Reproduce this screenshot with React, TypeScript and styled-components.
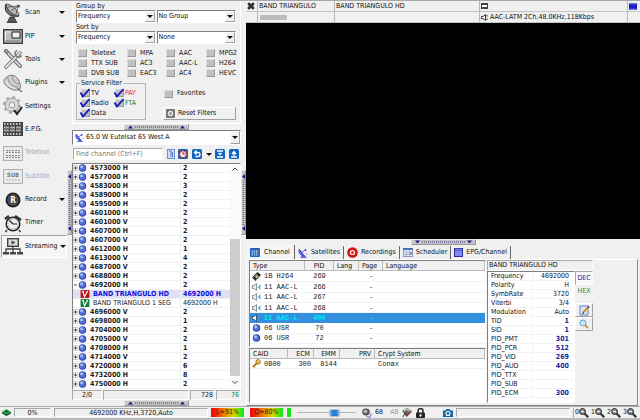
import React from "react";
import styled, { createGlobalStyle, css } from "styled-components";

const ui = '"DejaVu Sans Condensed", "DejaVu Sans", sans-serif';
const mono = '"Liberation Mono", monospace';

const Global = createGlobalStyle`
  * { box-sizing: border-box; }
  body { margin: 0; background: #f0f0f0; color: #111; font: 7px/9px ${ui}; }
  button, input, select { font: inherit; color: inherit; margin: 0; padding: 0; border: 0; border-radius: 0; background: none; }
  svg { display: block; flex: none; }
  table { border-collapse: separate; border-spacing: 0; }
  td, th { padding: 0; font-weight: normal; text-align: left; white-space: nowrap; }
`;

const sunken = css`
  border: 1px solid;
  border-color: #808080 #fff #fff #808080;
`;
const softSunken = css`
  border: 1px solid;
  border-color: #a8a8a8 #fdfdfd #fdfdfd #a8a8a8;
`;
const raised = css`
  border: 1px solid;
  border-color: #fff #a0a0a0 #a0a0a0 #fff;
`;

const Page = styled.div`
  min-height: 100vh;
  display: flex;
  flex-direction: column;
  border-top: 1px solid #a8a8a8;
  overflow: hidden;
`;
const Main = styled.div`
  flex: 1;
  display: flex;
`;

/* Left tool bar */
const Tools = styled.nav`
  width: 67px;
  flex: none;
  display: grid;
  grid-template-columns: minmax(0, 1fr);
  grid-template-rows: repeat(11, minmax(0, 1fr));
  height: 257px;
  padding-left: 1px;
`;
const Tool = styled.button<{ $active?: boolean }>`
  display: flex;
  align-items: center;
  gap: 2px;
  padding: 0 2px;
  text-align: left;
  &:disabled { color: #aaa; }
  ${(p) => p.$active && css`
    background: #f6f6f6;
    border: 1px solid;
    border-color: #a0a0a0 #fff #fff #a0a0a0;
    padding: 0 1px;
  `}
`;
const ToolLabel = styled.span`
  flex: 1;
`;

/* Splitters */
const Gutter = styled.div<{ $row?: boolean; $at: string }>`
  flex: none;
  display: flex;
  flex-direction: ${(p) => (p.$row ? "row" : "column")};
  ${(p) => (p.$row ? "height: 6px; justify-content: " + p.$at : "width: 5px; padding-top: " + p.$at)};
`;
const Grip = styled.button<{ $row?: boolean }>`
  width: ${(p) => (p.$row ? 65 : 5)}px;
  height: ${(p) => (p.$row ? 6 : 65)}px;
  background: #c4c4c4;
  border: 1px solid;
  border-color: #e6e6e6 #999 #999 #e6e6e6;
`;

/* Filter panel */
const Side = styled.aside`
  width: 169px;
  flex: none;
  display: flex;
  flex-direction: column;
`;
const Filters = styled.section`
  height: 123px;
  padding: 1px 4px 0 3px;
  border-left: 1px solid #fff;
  border-right: 1px solid #fff;
  border-bottom: 1px solid #fff;
`;
const Pair = styled.div`
  display: grid;
  grid-template-columns: 1fr 1fr;
  gap: 1px;
`;
const FieldLabel = styled.label`
  display: block;
  line-height: 8px;
`;
const SelectBox = styled.div<{ $h?: number }>`
  display: grid;
  height: ${(p) => p.$h || 13}px;
  background: #fff;
  ${sunken}
`;
const Select = styled.select<{ $indent?: number }>`
  grid-area: 1 / 1;
  appearance: none;
  min-width: 0;
  height: 100%;
  padding-left: ${(p) => p.$indent || 1}px;
  outline: 0;
`;
const SelectMark = styled.span`
  grid-area: 1 / 1;
  justify-self: start;
  align-self: center;
  padding-left: 2px;
  pointer-events: none;
`;
const DropMark = styled.span`
  grid-area: 1 / 1;
  justify-self: end;
  display: grid;
  place-items: center;
  width: 10px;
  background: #f0f0f0;
  pointer-events: none;
  ${raised}
`;
const Codecs = styled.div`
  display: grid;
  grid-template-columns: 49px 39px 40px 1fr;
  grid-auto-rows: 10px;
  padding: 4px 0 0 2px;
`;
const Check = styled.label<{ $tint?: string; $gap?: number }>`
  display: flex;
  align-items: center;
  gap: ${(p) => p.$gap ?? 4}px;
  white-space: nowrap;
  color: ${(p) => p.$tint || "inherit"};
`;
const Box = styled.input`
  appearance: none;
  width: 9px;
  height: 8px;
  background: #c0c0c0;
  border: 1px solid;
  border-color: #ddd #999 #999 #ddd;
`;
const TickCell = styled.span`
  display: grid;
  place-items: center;
  & > * { grid-area: 1 / 1; }
  & > svg { pointer-events: none; }
`;
const Lower = styled.div`
  display: flex;
  gap: 18px;
  margin-top: 1px;
`;
const Service = styled.fieldset`
  width: 70px;
  height: 41px;
  margin: 0;
  padding: 1px 0 0 2px;
  border: 1px solid #b5b5b5;
  legend { padding: 0 1px; margin-left: 1px; line-height: 8px; }
`;
const ServiceGrid = styled.div`
  display: grid;
  grid-template-columns: 34px 1fr;
  grid-auto-rows: 10px;
`;
const LowerRight = styled.div`
  flex: 1;
  display: flex;
  flex-direction: column;
  gap: 9px;
  padding-top: 10px;
`;
const Reset = styled.button`
  display: flex;
  align-items: center;
  gap: 3px;
  height: 13px;
  padding-left: 2px;
  margin-left: -1px;
  ${raised}
`;

/* Channel list */
const SearchRow = styled.div`
  display: flex;
  align-items: center;
  justify-content: space-between;
  height: 18px;
  padding: 0 2px 0 1px;
`;
const Search = styled.input`
  width: 90px;
  height: 12px;
  padding: 0 2px;
  background: #fff;
  ${softSunken}
  &::placeholder { color: #777; opacity: 1; }
`;
const IconButton = styled.button`
  display: grid;
  place-items: center;
`;
const TreeBox = styled.div`
  flex: 1;
  display: flex;
  background: #fff;
  ${sunken}
`;
const Tree = styled.table`
  flex: 1;
  width: 156px;
  height: 225px;
  table-layout: fixed;
`;
const TreeRow = styled.tr<{ $selected?: boolean; $child?: boolean }>`
  height: 9px;
  line-height: 8px;
  background: ${(p) => (p.$selected ? "#dfdff8" : "#fff")};
  color: ${(p) => (p.$selected ? "#1010d8" : "#1c1c1c")};
  font-weight: ${(p) => (p.$child && !p.$selected ? "normal" : "bold")};
  td { border-bottom: 1px solid #f0f0f0; font-weight: inherit; }
  td + td { border-left: 1px solid #eee; padding-left: 2px; }
`;
const TreeName = styled.div<{ $child?: boolean }>`
  display: flex;
  align-items: center;
  height: 8px;
  gap: 3px;
  padding-left: ${(p) => (p.$child ? 7 : 0)}px;
`;
const Nodes = styled.span`
  display: flex;
  align-items: center;
`;
const Scroll = styled.div`
  width: 10px;
  display: flex;
  flex-direction: column;
  align-items: center;
  justify-content: space-between;
  background: #fafafa;
  padding: 3px 0;
`;
const Thumb = styled.div`
  width: 10px;
  flex: 2;
  background: #cdcdcd;
`;
const Track = styled.div`
  flex: 1;
`;
const Counts = styled.div`
  display: grid;
  grid-template-columns: 30px 1fr 25px 25px;
  gap: 1px;
  height: 10px;
`;
const Count = styled.output<{ $align?: string; $tint?: string }>`
  ${softSunken}
  line-height: 8px;
  padding: 0 1px;
  text-align: ${(p) => p.$align || "right"};
  color: ${(p) => p.$tint || "inherit"};
`;

/* Player */
const Player = styled.main`
  flex: 1;
  min-width: 0;
  display: flex;
  flex-direction: column;
`;
const Titles = styled.div`
  display: grid;
  grid-template-columns: 12px 77px 145px 1fr 12px;
  grid-auto-rows: 11px;
`;
const Title = styled.div`
  display: flex;
  align-items: center;
  gap: 2px;
  padding-left: 1px;
  border-right: 1px solid #b8b8b8;
  border-bottom: 1px solid #c4c4c4;
  white-space: nowrap;
  &:nth-child(5n) { border-right: 0; }
`;
const Blank = styled.span`
  width: 27px;
  height: 5px;
  margin-left: 1px;
  background: #bcbcbc;
`;
const Video = styled.div`
  flex: 1;
  background: #000;
`;
const Tabs = styled.div`
  display: flex;
  height: 14px;
`;
const Tab = styled.button<{ $active?: boolean }>`
  display: flex;
  align-items: center;
  gap: ${(p) => (p.$active ? 4 : 3)}px;
  padding: 0 ${(p) => (p.$active ? 4 : 3)}px;
  border-right: 1px solid #666;
  margin-top: ${(p) => (p.$active ? 0 : 1)}px;
  background: ${(p) => (p.$active ? "#f5f5f5" : "transparent")};
`;
const Details = styled.div`
  display: flex;
  gap: 1px;
  height: 147px;
  padding: 0 44px 2px 2px;
  margin-right: 2px;
  border: 1px solid;
  border-color: #fff #888 #888 #fff;
`;
const Streams = styled.div`
  flex: 1;
  min-width: 0;
  display: flex;
  flex-direction: column;
  gap: 1px;
`;
const Panel = styled.div<{ $grow?: boolean }>`
  background: #fff;
  flex: ${(p) => (p.$grow ? "1" : "none")};
  height: ${(p) => (p.$grow ? "auto" : "87px")};
  ${sunken}
`;
const Grid = styled.table<{ $h: number }>`
  width: 100%;
  height: ${(p) => p.$h}px;
  table-layout: fixed;
  th {
    height: 10px;
    line-height: 8px;
    background: #f0f0f0;
    border-right: 1px solid #bbb;
    border-bottom: 1px solid #bbb;
    padding: 0 3px;
  }
  td { font: 7px/8px ${mono}; border-bottom: 1px solid #f2f2f2; padding: 0 3px; color: #222; }
`;
const GridRow = styled.tr<{ $selected?: boolean }>`
  ${(p) => p.$selected && css`
    background: #3390df;
    && td { color: #00e4f8; font-weight: bold; border-color: #3390df; }
  `}
`;
const Cell = styled.td<{ $align?: string }>`
  && { text-align: ${(p) => p.$align || "left"}; }
`;
const Head = styled.th<{ $align?: string }>`
  && { text-align: ${(p) => p.$align || "left"}; }
`;
const WithIcon = styled.span`
  display: flex;
  align-items: center;
  gap: 3px;
  margin-left: -1px;
  white-space: pre;
`;
const Info = styled.div`
  width: 106px;
  flex: none;
  display: grid;
  grid-template: 11px 1fr / 88px 1fr;
`;
const InfoTitle = styled.div`
  grid-column: 1 / 3;
  padding-left: 1px;
  ${softSunken}
`;
const InfoBox = styled.div`
  background: #fff;
  ${sunken}
`;
const Props = styled.table`
  width: 100%;
  line-height: 8px;
  td, th { height: 9px; border-bottom: 1px solid #f2f2f2; padding-left: 3px; }
`;
const Value = styled.td<{ $id?: boolean }>`
  && {
    text-align: right;
    padding-right: 5px;
    border-left: 1px solid #f2f2f2;
    color: ${(p) => (p.$id ? "#20209c" : "inherit")};
    font-weight: ${(p) => (p.$id ? "bold" : "normal")};
  }
`;
const Modes = styled.div`
  display: flex;
  flex-direction: column;
`;
const Mode = styled.button<{ $tint: string; $on?: boolean }>`
  height: 12px;
  color: ${(p) => p.$tint};
  ${(p) => p.$on && softSunken}
  ${(p) => p.$on && "background: #f8f8f8; height: 14px;"}
`;
const ModeIcon = styled.button`
  display: grid;
  place-items: center;
  height: 14px;
  ${raised}
`;
const Spacer = styled.div`
  height: 6px;
`;

/* Status bar */
const Status = styled.footer`
  display: flex;
  align-items: center;
  height: 14px;
  gap: 3px;
  padding: 0 2px;
  border-top: 1px solid #aaa;
  border-bottom: 2px solid #bbb;
`;
const StatusCell = styled.output<{ $w: number }>`
  width: ${(p) => p.$w}px;
  height: 9px;
  line-height: 8px;
  text-align: center;
  white-space: nowrap;
  ${softSunken}
`;
const Meter = styled.output<{ $w: number }>`
  width: ${(p) => p.$w}px;
  height: 9px;
  text-align: center;
  margin-right: 3px;
  color: #3a1800;
  background: linear-gradient(90deg, #f01010 8%, #f09000 45%, #c8e000 72%, #18e818 95%);
`;
const Led = styled.span`
  width: 4px;
  height: 9px;
  margin-left: -2px;
  background: #12e612;
`;
const Volume = styled.input`
  appearance: none;
  width: 59px;
  height: 9px;
  margin: 0 3px;
  background: linear-gradient(#b4b4b4, #b4b4b4) center / 100% 1px no-repeat;
  &::-webkit-slider-thumb {
    appearance: none;
    width: 11px;
    height: 8px;
    border: 1px solid #a9c4e0;
    border-radius: 2px;
    background: linear-gradient(90deg, #8db9e6, #287fcc 30%, #287fcc 70%, #8db9e6);
  }
`;
const Muted = styled.span`
  color: #999;
  margin-left: 4px;
`;
const StatusFill = styled.div`
  flex: 1;
  height: 9px;
  margin-left: 0;
  ${softSunken}
`;
const Zooms = styled.div`
  display: flex;
  gap: 1px;
  border-left: 1px solid #aaa;
  padding-left: 1px;
`;
const Zoom = styled.button`
  display: flex;
  align-items: center;
  width: 15px;
`;
const StatusIcon = styled.button<{ $gap?: number }>`
  margin-left: ${(p) => p.$gap || 0}px;
`;

/* Icons */
const Arrow = () => (
  <svg width="6" height="3" viewBox="0 0 6 3"><path d="M0 0h6L3 3z" fill="#111" /></svg>
);
const Ball = () => (
  <svg width="9" height="8" viewBox="0 0 9 9">
    <circle cx="4.5" cy="4.5" r="4.2" fill="#3348b4" />
    <circle cx="4.3" cy="4.2" r="3.2" fill="#5472d6" />
    <circle cx="3.5" cy="3" r="1.7" fill="#a9bcf2" />
  </svg>
);
const Expander = ({ open }: { open?: boolean }) => (
  <svg width="5" height="8" viewBox="0 0 5 8">
    {!open && <path d="M.3 1.5h4.4v5H.3z" fill="#fff" stroke="#aaa" strokeWidth=".6" />}
    <path d="M1 4h3" stroke="#222" strokeWidth=".8" />
    {!open && <path d="M2.5 2.5v3" stroke="#222" strokeWidth=".8" />}
  </svg>
);
const VMark = ({ fill }: { fill: string }) => (
  <svg width="10" height="8" viewBox="0 0 10 9">
    <rect width="10" height="9" rx="1" fill={fill} />
    <path d="M2.5 1.5l2 6L8 1" fill="none" stroke="#fff" strokeWidth="1.3" />
    <path d="M1.5 1.5H4" stroke="#fff" />
  </svg>
);
const Tick = () => (
  <svg width="12" height="11" viewBox="0 0 12 11">
    <path d="M1.5 4.5l2.5 4L10.5 1" fill="none" stroke="#1818b8" strokeWidth="1.9" />
  </svg>
);
const Dish = ({ size = 10 }: { size?: number }) => (
  <svg width={size} height={size} viewBox="0 0 12 12">
    <path d="M1.5 1.5C0 5 2 9.5 7.5 9.5z" fill="#6a74ee" stroke="#3038c8" strokeWidth=".8" />
    <path d="M1.5 1.5l6 8M4.5 5.5L8.5 2.5" stroke="#2c34c0" strokeWidth=".9" />
    <circle cx="9" cy="2.5" r="1.1" fill="#2c34c0" />
    <path d="M6 9l-3 2.5h7L7.5 9zM9.5 6l1.5 2" fill="#4a54dc" stroke="#4a54dc" strokeWidth=".8" />
  </svg>
);
const GripMark = ({ row, down }: { row?: boolean; down?: boolean }) =>
  row ? (
    <svg width="63" height="4" viewBox="0 0 63 4">
      <path d="M10 2h43" stroke="#686a98" strokeWidth="1.6" strokeDasharray="1 1" />
      <path d={down ? "M3 .5h5L5.5 3.5zM55 .5h5L57.5 3.5z" : "M3 3.5h5L5.5 .5zM55 3.5h5L57.5 .5z"} fill="#1c1c90" />
    </svg>
  ) : (
    <svg width="3" height="63" viewBox="0 0 3 63">
      <path d="M1.5 9v45" stroke="#686a98" strokeWidth="1.6" strokeDasharray="1 1" />
      <path d="M3 3v5L0 5.5zM3 55v5L0 57.5z" fill="#1c1c90" />
    </svg>
  );

const toolArt: Record<string, React.ReactNode> = {
  Scan: (<>
    <path d="M3 1C0 8 6 15 16 13z" fill="#777" stroke="#222" />
    <path d="M3 1C8 1 16 7 16 13 9 12 4 7 3 1z" fill="#bbb" stroke="#333" strokeWidth=".8" />
    <path d="M8 8l7-5M5 4l10-1M13 11l2-8" stroke="#444" strokeWidth=".8" />
    <circle cx="15.5" cy="3" r="1.6" fill="#555" />
    <path d="M7 14l-3 6h10l-3-6z" fill="#555" stroke="#222" strokeWidth=".7" />
  </>),
  PIP: (<>
    <rect x=".7" y="3.7" width="18.6" height="13.6" fill="#bcbcbc" stroke="#333" strokeWidth="1.3" />
    <path d="M2.5 14V6h7" fill="none" stroke="#eee" strokeWidth="1.2" />
    <rect x="9" y="6" width="8" height="6" fill="#eee" stroke="#222" />
    <path d="M3 15h14" stroke="#777" />
  </>),
  Tools: (<>
    <path d="M3 2l14 15" stroke="#555" strokeWidth="4" strokeLinecap="round" />
    <path d="M3 2l14 15" stroke="#ccc" strokeWidth="2.4" strokeLinecap="round" />
    <path d="M17 4L3 18" stroke="#666" strokeWidth="3.4" strokeLinecap="round" />
    <path d="M17 4L3 18" stroke="#e2e2e2" strokeWidth="2" strokeLinecap="round" />
    <path d="M14 1.5a3.5 3.5 0 1 0 4.5 5" fill="none" stroke="#777" strokeWidth="1.5" />
    <path d="M1 1l5 2-2 3z" fill="#888" />
  </>),
  Plugins: (<>
    <path d="M4 4c4-4 10-1 12 4s2 8-1 9S4 15 2 11s-1-5 2-7z" fill="#d0d0d0" stroke="#777" />
    <path d="M5 4c-1 4 4 10 10 10M9 3c0 4 3 7 7 8" fill="none" stroke="#888" />
    <path d="M3 8c2 5 6 7 11 8" fill="none" stroke="#f4f4f4" />
    <path d="M14 15l5 4" stroke="#777" strokeWidth="1.6" />
  </>),
  Settings: (<>
    <circle cx="9" cy="9" r="6.8" fill="#d8d8d8" stroke="#999" />
    <circle cx="9" cy="9" r="8" fill="none" stroke="#aaa" strokeWidth="2" strokeDasharray="3 3.28" />
    <circle cx="9" cy="9" r="2.8" fill="#f4f4f4" stroke="#999" />
    <path d="M11 14l3 4 5-7" fill="none" stroke="#222" strokeWidth="2" />
  </>),
  "E.P.G.": (<>
    <rect y="3" width="20" height="14" fill="#444" />
    <path d="M1 5h18M1 15h18" stroke="#eee" strokeWidth="1.5" strokeDasharray="1.5 1.5" />
    <path d="M1 8.5h18M1 11.5h18" stroke="#aaa" strokeWidth="2" strokeDasharray="5 1" />
  </>),
  Teletext: (<>
    <rect x=".6" y="3.6" width="18.8" height="13.8" fill="#ededed" stroke="#aaa" />
    <path d="M3 8.5h14M3 13.5h14" stroke="#888" strokeWidth="3" strokeDasharray="2 1" />
    <path d="M3 8.5h14M3 13.5h14" stroke="#ddd" />
  </>),
  Subtitle: (<>
    <rect x=".6" y="3.6" width="18.8" height="13.8" fill="#ededed" stroke="#aaa" />
    <text x="10" y="11" fontSize="6" fontWeight="bold" fill="#777" textAnchor="middle">SUB</text>
    <path d="M3 14h14" stroke="#aaa" strokeDasharray="2 1" />
  </>),
  Record: (<>
    <circle cx="10" cy="10" r="7.5" fill="#222" />
    <circle cx="10" cy="10" r="5.2" fill="#444" stroke="#777" strokeWidth=".6" />
    <text x="10" y="13" fontSize="8" fontWeight="bold" fill="#fff" textAnchor="middle">R</text>
  </>),
  Timer: (<>
    <circle cx="10" cy="11" r="6.8" fill="#eee" stroke="#222" strokeWidth="1.5" />
    <path d="M10 11L6 7M10 11h4" stroke="#222" strokeWidth="1.2" />
    <path d="M12 3l6 4M2 6l4-3" stroke="#333" strokeWidth="2.6" />
    <path d="M4 17l-1.5 2M16 17l1.5 2" stroke="#333" strokeWidth="1.4" />
    <circle cx="10" cy="11" r="5" fill="none" stroke="#888" strokeDasharray="1 1.6" />
  </>),
  Streaming: (<>
    <rect x="4.7" y="2.7" width="10.6" height="7.6" fill="#ddd" stroke="#444" strokeWidth="1.4" />
    <path d="M8.5 4.5v4l4-2z" fill="#444" />
    <path d="M10 10v6M3 16v-3h14v3" fill="none" stroke="#444" strokeWidth="1.3" />
    <path d="M0 16h6v2.5H0zM7 16h6v2.5H7zM14 16h6v2.5h-6z" fill="#444" />
  </>),
};

const tools: { name: string; menu?: boolean; off?: boolean; active?: boolean }[] = [
  { name: "Scan", menu: true }, { name: "PIP", menu: true }, { name: "Tools", menu: true },
  { name: "Plugins", menu: true }, { name: "Settings" }, { name: "E.P.G." },
  { name: "Teletext", off: true }, { name: "Subtitle", off: true },
  { name: "Record", menu: true }, { name: "Timer" }, { name: "Streaming", menu: true, active: true },
];

const codecs = ["Teletext", "MPA", "AAC", "MPG2", "TTX SUB", "AC3", "AAC-L", "H264", "DVB SUB", "EAC3", "AC4", "HEVC"];

const channels: [string, string, string?][] = [
  ["4573000 H", "2"], ["4577000 H", "2"], ["4583000 H", "3"], ["4589000 H", "2"], ["4595000 H", "2"],
  ["4601000 H", "2"], ["4601000 V", "2"], ["4607000 H", "2"], ["4607000 V", "2"], ["4612000 H", "1"],
  ["4613000 V", "4"], ["4687000 V", "2"], ["4688000 H", "2"], ["4692000 H", "2", "open"],
  ["BAND TRIANGULO HD", "4692000 H", "hd"], ["BAND TRIANGULO 1 SEG", "4692000 H", "sd"],
  ["4696000 V", "2"], ["4698000 H", "1"], ["4704000 H", "2"], ["4705000 V", "2"], ["4708000 H", "1"],
  ["4714000 V", "2"], ["4720000 H", "6"], ["4732000 H", "8"], ["4750000 H", "2"],
];

const streams: [string, string, string][] = [
  ["film", "1B H264", "269"], ["sound", "11 AAC-L", "266"], ["sound", "11 AAC-L", "267"],
  ["sound", "11 AAC-L", "268"], ["active", "11 AAC-L", "400"], ["ball", "06 USR", "70"], ["ball", "06 USR", "72"],
];

const props: [string, string][] = [
  ["Frequency", "4692000"], ["Polarity", "H"], ["SymbRate", "3720"], ["Viterbi", "3/4"], ["Modulation", "Auto"],
  ["TID", "1"], ["SID", "1"], ["PID_PMT", "301"], ["PID_PCR", "512"], ["PID_VID", "269"], ["PID_AUD", "400"],
  ["PID_TTX", ""], ["PID_SUB", ""], ["PID_ECM", "300"],
];

const StreamIcon = ({ kind }: { kind: string }) => {
  if (kind === "ball") return <Ball />;
  if (kind === "film")
    return (
      <svg width="9" height="9" viewBox="0 0 9 9">
        <path d="M0 5.5L5.5 0 9 3 3.5 9z" fill="#222" />
        <path d="M3 5l2-2 1.5 1.3-2 2z" fill="#e8d890" />
        <path d="M1.5 5.5L5.5 1.5M4 7.8l4-4.3" stroke="#ddd" strokeWidth=".8" strokeDasharray="1 1" />
      </svg>
    );
  return (
    <svg width="9" height="8" viewBox="0 0 9 8">
      <path d="M.5 2.5H2L4.5.5v7L2 5.5H.5z" fill="#eee" stroke={kind === "active" ? "#345" : "#777"} strokeWidth=".8" />
      {kind === "sound" && <path d="M5.5 4L8.5 1v6z" fill="#5fb8d8" />}
    </svg>
  );
};

const BlueTile = ({ d }: { d: string }) => (
  <svg width="10" height="10" viewBox="0 0 10 10">
    <rect width="10" height="10" rx="1.5" fill="#1467c0" />
    <path d={d} fill="none" stroke="#fff" strokeWidth="1.3" />
  </svg>
);

const tabs: [string, React.ReactNode][] = [
  ["Channel", <svg width="10" height="9" viewBox="0 0 10 9" key="c"><rect width="10" height="9" rx="1" fill="#1c60c0" /><path d="M1.5 3h7M1.5 5h7M1.5 7h7" stroke="#dff0ff" strokeWidth="1.2" strokeDasharray="1.5 .7" /><path d="M5.8 3h1.5" stroke="#f0b030" strokeWidth="1.2" /></svg>],
  ["Satellites", <Dish key="s" />],
  ["Recordings", <svg width="11" height="11" viewBox="0 0 11 11" key="r"><circle cx="5.5" cy="5.5" r="5.3" fill="#d41414" /><circle cx="5.5" cy="5.5" r="2.6" fill="#fff" /><circle cx="5.5" cy="5.5" r="1.5" fill="#e02020" /></svg>],
  ["Scheduler", <svg width="10" height="9" viewBox="0 0 10 9" key="d"><rect x=".4" y=".4" width="9.2" height="8.2" fill="#e4ecf8" stroke="#7088b8" strokeWidth=".8" /><path d="M0 1h10" stroke="#3060b0" strokeWidth="1.6" /><path d="M1 4.2h8M1 6.5h8M3.5 2v6M6.5 2v6" stroke="#8098c8" strokeWidth=".6" /><path d="M7 4.5h2V6H7z" fill="#d05050" /></svg>],
  ["EPG/Channel", <svg width="9" height="9" viewBox="0 0 9 9" key="e"><rect width="9" height="9" fill="#2b2f9c" /><rect x="1" y="2.5" width="7" height="5.5" fill="#8488f4" /><path d="M1 1.3h7" stroke="#c8caff" strokeWidth=".7" /></svg>],
];

export default function App() {
  return (
    <>
      <Global />
      <Page>
        <Main>
          <Tools>
            {tools.map((t) => (
              <Tool key={t.name} disabled={t.off} $active={t.active}>
                <svg width="20" height="20" viewBox="0 0 20 20">{toolArt[t.name]}</svg>
                <ToolLabel>{t.name}</ToolLabel>
                {t.menu && <Arrow />}
              </Tool>
            ))}
          </Tools>
          <Gutter $at="169px"><Grip aria-label="Toggle tool bar"><GripMark /></Grip></Gutter>
          <Side>
            <Filters>
              <FieldLabel htmlFor="group">Group by</FieldLabel>
              <Pair>
                <SelectBox><Select id="group"><option>Frequency</option></Select><DropMark><Arrow /></DropMark></SelectBox>
                <SelectBox><Select aria-label="Second group"><option>No Group</option></Select><DropMark><Arrow /></DropMark></SelectBox>
              </Pair>
              <FieldLabel htmlFor="sort">Sort by</FieldLabel>
              <Pair>
                <SelectBox><Select id="sort"><option>Frequency</option></Select><DropMark><Arrow /></DropMark></SelectBox>
                <SelectBox><Select aria-label="Second sort"><option>None</option></Select><DropMark><Arrow /></DropMark></SelectBox>
              </Pair>
              <Codecs>
                {codecs.map((c) => <Check key={c}><Box type="checkbox" />{c}</Check>)}
              </Codecs>
              <Lower>
                <Service>
                  <legend>Service Filter</legend>
                  <ServiceGrid>
                    {[["TV"], ["PAY", "#e82030"], ["Radio"], ["FTA", "#188030"], ["Data"]].map(([n, tint]) => (
                      <Check key={n} $tint={tint} $gap={0}>
                        <TickCell><Box type="checkbox" defaultChecked /><Tick /></TickCell>{n}
                      </Check>
                    ))}
                  </ServiceGrid>
                </Service>
                <LowerRight>
                  <Check><Box type="checkbox" />Favorites</Check>
                  <Reset>
                    <svg width="9" height="9" viewBox="0 0 9 9"><rect width="9" height="9" rx="1" fill="#777" /><circle cx="4.5" cy="4.5" r="2.3" fill="#aaa" stroke="#fff" /></svg>
                    Reset Filters
                  </Reset>
                </LowerRight>
              </Lower>
            </Filters>
            <Gutter $row $at="center"><Grip $row aria-label="Toggle filters"><GripMark row /></Grip></Gutter>
            <SelectBox $h={15}>
              <SelectMark><Dish size={9} /></SelectMark>
              <Select aria-label="Satellite" $indent={13}><option>65.0 W Eutelsat 65 West A</option></Select>
              <DropMark><Arrow /></DropMark>
            </SelectBox>
            <SearchRow>
              <Search aria-label="Find channel" placeholder="Find channel (Ctrl+F)" />
              <IconButton aria-label="Columns"><svg width="8" height="10" viewBox="0 0 8 10"><rect x=".5" y=".5" width="7" height="9" fill="#cfdcf6" stroke="#6c8cd0" /><path d="M2 2h2v6M5.5 3v5" fill="none" stroke="#5878c4" /></svg></IconButton>
              <IconButton aria-label="Locate"><svg width="10" height="10" viewBox="0 0 10 10"><rect width="10" height="10" rx="1.5" fill="#1b5fae" /><circle cx="5" cy="5.2" r="3.4" fill="#f2f2f2" stroke="#d03020" /><path d="M5 5.2V3M5 5h2" stroke="#c02020" /></svg></IconButton>
              <IconButton aria-label="Back"><BlueTile d="M4.5 1.5l-2 2 2 2M3 3.5h3a2 2 0 0 1 0 4H3.5" /></IconButton>
              <IconButton aria-label="History"><Arrow /></IconButton>
              <IconButton aria-label="Expand all"><BlueTile d="M2 2h6M2 8h6M3.5 4L5 5.5 6.5 4" /></IconButton>
              <IconButton aria-label="Collapse all"><BlueTile d="M2 8h6M3 5l2-2.5L7 5M5 3v4" /></IconButton>
            </SearchRow>
            <TreeBox>
              <Tree>
                <colgroup><col width="107" /><col /></colgroup>
                <tbody>
                  {channels.map(([name, value, kind], i) => {
                    const child = kind === "hd" || kind === "sd";
                    return (
                      <TreeRow key={i} $child={child} $selected={kind === "hd"}>
                        <td>
                          <TreeName $child={child}>
                            {child ? <VMark fill={kind === "hd" ? "#b8141c" : "#108038"} /> : <Nodes><Expander open={kind === "open"} /><Ball /></Nodes>}
                            {name}
                          </TreeName>
                        </td>
                        <td>{value}</td>
                      </TreeRow>
                    );
                  })}
                </tbody>
              </Tree>
              <Scroll>
                <svg width="6" height="4" viewBox="0 0 6 4"><path d="M.5 3.5L3 1l2.5 2.5" fill="none" stroke="#444" /></svg>
                <Track /><Thumb />
                <svg width="6" height="10" viewBox="0 0 6 10"><path d="M.5 5L3 7.5 5.5 5" fill="none" stroke="#444" /></svg>
              </Scroll>
            </TreeBox>
            <Counts>
              <Count $align="center">2/0</Count><Count /><Count>728</Count><Count $tint="#208838">76</Count>
            </Counts>
            <Gutter $row $at="center"><Grip $row aria-label="Toggle status"><GripMark row /></Grip></Gutter>
          </Side>
          <Gutter $at="169px"><Grip aria-label="Toggle channel list"><GripMark /></Grip></Gutter>
          <Player>
            <Titles>
              <Title><svg width="8" height="8" viewBox="0 0 8 8"><path d="M1 1h2v1h2V1h2v2H6v2h1v2H5V6H3v1H1V5h1V3H1z" fill="#333" stroke="#333" strokeWidth=".6" /></svg></Title>
              <Title>BAND TRIANGULO</Title>
              <Title>BAND TRIANGULO HD</Title>
              <Title><svg width="7" height="6" viewBox="0 0 7 6"><path d="M0 0h7v6H0z" fill="#444" /><path d="M1 2h5v2H1z" fill="#fff" /></svg></Title>
              <Title><svg width="8" height="7" viewBox="0 0 9 7"><rect width="9" height="7" fill="#1818c0" /><path d="M1 1.5h7M1 5.5h7" stroke="#5c60e8" strokeWidth=".8" /></svg></Title>
              <Title />
              <Title><Blank /></Title>
              <Title />
              <Title><svg width="7" height="7" viewBox="0 0 7 7"><path d="M.5 2.5H2L4.5.5v6L2 4.5H.5z" fill="#fff" stroke="#222" strokeWidth=".9" /><path d="M6 1v1.5M6 4.5V6" stroke="#222" /></svg>AAC-LATM 2Ch,48.0KHz,118Kbps</Title>
              <Title />
            </Titles>
            <Video />
            <Gutter $row $at="center"><Grip $row aria-label="Toggle details"><GripMark row down /></Grip></Gutter>
            <Tabs role="tablist">
              {tabs.map(([name, icon], i) => (
                <Tab key={name} role="tab" aria-selected={i === 0} $active={i === 0}>{icon}{name}</Tab>
              ))}
            </Tabs>
            <Details>
              <Streams>
                <Panel>
                  <Grid $h={83}>
                    <colgroup><col width="55" /><col width="29" /><col width="25" /><col width="24" /><col /></colgroup>
                    <thead><tr><Head>Type</Head><Head $align="center">PID</Head><Head>Lang</Head><Head>Page</Head><Head>Language</Head></tr></thead>
                    <tbody>
                      {streams.map(([kind, type, pid], i) => (
                        <GridRow key={i} $selected={kind === "active"}>
                          <Cell><WithIcon><StreamIcon kind={kind} />{type}</WithIcon></Cell>
                          <Cell $align="center">{pid}</Cell><Cell /><Cell $align="center">-</Cell><Cell />
                        </GridRow>
                      ))}
                    </tbody>
                  </Grid>
                </Panel>
                <Panel $grow>
                  <Grid $h={20}>
                    <colgroup><col width="38" /><col width="26" /><col width="26" /><col width="35" /><col /></colgroup>
                    <thead><tr><Head>CAID</Head><Head $align="right">ECM</Head><Head $align="right">EMM</Head><Head $align="right">PRV</Head><Head>Crypt System</Head></tr></thead>
                    <tbody>
                      <tr>
                        <Cell>
                          <WithIcon>
                            <svg width="9" height="9" viewBox="0 0 10 10"><path d="M1 9l5-5" stroke="#a87810" strokeWidth="2" /><circle cx="6.8" cy="3.2" r="2.6" fill="#e0b030" stroke="#94690c" strokeWidth=".8" /><circle cx="7.5" cy="2.5" r=".8" fill="#fff" /><path d="M2 8l1.5 1.5" stroke="#a87810" /></svg>
                            0B00
                          </WithIcon>
                        </Cell>
                        <Cell $align="right">300</Cell><Cell $align="right">8144</Cell><Cell /><Cell>Conax</Cell>
                      </tr>
                    </tbody>
                  </Grid>
                </Panel>
              </Streams>
              <Info>
                <InfoTitle>BAND TRIANGULO HD</InfoTitle>
                <InfoBox>
                  <Props>
                    <tbody>
                      {props.map(([k, v], i) => <tr key={k}><th scope="row">{k}</th><Value $id={i > 4}>{v}</Value></tr>)}
                    </tbody>
                  </Props>
                </InfoBox>
                <Modes>
                  <Mode $tint="#20209c" $on>DEC</Mode>
                  <Mode $tint="#209040">HEX</Mode>
                  <Spacer />
                  <ModeIcon aria-label="Edit"><svg width="11" height="11" viewBox="0 0 11 11"><path d="M1 1h8v9H1z" fill="#d8e8fa" stroke="#5c88c8" /><path d="M4 7.5L9.5 2" stroke="#e08820" strokeWidth="2" /><path d="M3 9l1-2 1.2 1.2z" fill="#222" /><path d="M9 2.5l1-1" stroke="#345" strokeWidth="2" /></svg></ModeIcon>
                  <ModeIcon aria-label="Search"><svg width="10" height="10" viewBox="0 0 10 10"><path d="M6 6l3 3" stroke="#d08830" strokeWidth="1.8" /><circle cx="4" cy="4" r="3" fill="#c8e8fc" stroke="#6c9cd0" /></svg></ModeIcon>
                </Modes>
              </Info>
            </Details>
          </Player>
        </Main>
        <Status>
          <svg width="9" height="7" viewBox="0 0 10 8"><path d="M0 3l5-3 5 3-5 3z" fill="#2ea048" /><path d="M0 3v2l5 3 5-3V3L5 6z" fill="#0c5420" /><path d="M3 3l2-1 2 1-2 1z" fill="#0c4018" /></svg>
          <StatusCell $w={37}>0%</StatusCell>
          <StatusCell $w={154}>4692000 KHz,H,3720,Auto</StatusCell>
          <Meter $w={33}>L=91%</Meter>
          <Meter $w={33}>Q=80%</Meter>
          <Led />
          <Volume type="range" aria-label="Volume" defaultValue={66} />
          <StatusIcon aria-label="Mute"><svg width="10" height="10" viewBox="0 0 10 10"><ellipse cx="4" cy="4" rx="3.8" ry="3.4" fill="#555" /><ellipse cx="3.5" cy="3.5" rx="2" ry="1.7" fill="#bbb" /><path d="M3 7l3 2M6 9.5c2 0 3-2 3-4" stroke="#8890d8" strokeWidth="1.5" fill="none" /></svg></StatusIcon>
          <span>68</span>
          <Muted>AB</Muted>
          <StatusIcon aria-label="Sound device"><svg width="11" height="10" viewBox="0 0 11 10"><path d="M0 3L5 0l5 3-5 6z" fill="#666" /><path d="M2 3l3-1.5L8 3" stroke="#eee" fill="none" /><path d="M4 8l5-4" stroke="#c03030" strokeWidth="1.5" /><path d="M1 9l2-4 2 3" stroke="#333" fill="none" /></svg></StatusIcon>
          <StatusIcon aria-label="Lock"><svg width="9" height="10" viewBox="0 0 9 10"><path d="M2 5V3a2.5 2.5 0 0 1 5 0v2" fill="none" stroke="#222" strokeWidth="1.5" /><rect y="4.5" width="9" height="5.5" rx="1" fill="#222" /><path d="M3 7.2h3M4.5 6v3" stroke="#ddd" /></svg></StatusIcon>
          <StatusIcon $gap={15} aria-label="Snapshot"><svg width="10" height="8" viewBox="0 0 10 8"><path d="M0 1.5h2.5L3.5 0h3l1 1.5H10V8H0z" fill="#1468a0" /><circle cx="5" cy="4.5" r="2" fill="none" stroke="#fff" strokeWidth="1.1" /></svg></StatusIcon>
          <StatusFill />
          <Zooms>
            {[0, 1, 2, 3].map((n) => (
              <Zoom key={n}>{n}<svg width="10" height="10" viewBox="0 0 10 10"><path d="M5 5l4.2 4.2" stroke="#333" strokeWidth="2.2" /><circle cx="3.5" cy="3.5" r="2.8" fill="#999" stroke="#444" strokeWidth="1.2" /><path d="M2 3.5h3" stroke="#eee" /></svg></Zoom>
            ))}
          </Zooms>
        </Status>
      </Page>
    </>
  );
}
